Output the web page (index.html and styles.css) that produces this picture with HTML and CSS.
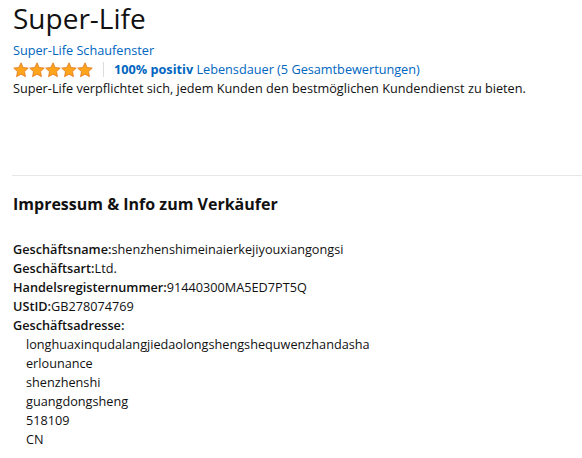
FILE: index.html
```html
<html>

<head>
  <title>Super-Life</title>
  <link rel="stylesheet" href="styles.css">
</head>

<body>
  <div id="seller">
    <h1>Super-Life</h1>
    <a class="store" href="#">Super-Life Schaufenster</a>
    <div class="rating">
      <span class="stars">
        <svg viewBox="0 0 16 16"><path d="M8 0.8l2.2 4.7 5.1 0.6-3.8 3.5 1 5.1L8 12.2 3.5 14.7l1-5.1L0.7 6.1l5.1-0.6z"/></svg>
        <svg viewBox="0 0 16 16"><path d="M8 0.8l2.2 4.7 5.1 0.6-3.8 3.5 1 5.1L8 12.2 3.5 14.7l1-5.1L0.7 6.1l5.1-0.6z"/></svg>
        <svg viewBox="0 0 16 16"><path d="M8 0.8l2.2 4.7 5.1 0.6-3.8 3.5 1 5.1L8 12.2 3.5 14.7l1-5.1L0.7 6.1l5.1-0.6z"/></svg>
        <svg viewBox="0 0 16 16"><path d="M8 0.8l2.2 4.7 5.1 0.6-3.8 3.5 1 5.1L8 12.2 3.5 14.7l1-5.1L0.7 6.1l5.1-0.6z"/></svg>
        <svg viewBox="0 0 16 16"><path d="M8 0.8l2.2 4.7 5.1 0.6-3.8 3.5 1 5.1L8 12.2 3.5 14.7l1-5.1L0.7 6.1l5.1-0.6z"/></svg>
      </span>
      <span class="sep"></span>
      <a href="#"><b>100% positiv</b> Lebensdauer (5 Gesamtbewertungen)</a>
    </div>
    <p>Super-Life verpflichtet sich, jedem Kunden den bestmöglichen Kundendienst zu bieten.</p>
  </div>

  <div id="impressum">
    <h3>Impressum &amp; Info zum Verkäufer</h3>
    <ul>
      <li><b>Geschäftsname:</b>shenzhenshimeinaierkejiyouxiangongsi</li>
      <li><b>Geschäftsart:</b>Ltd.</li>
      <li><b>Handelsregisternummer:</b>91440300MA5ED7PT5Q</li>
      <li><b>UStID:</b>GB278074769</li>
      <li><b>Geschäftsadresse:</b>
        <ul class="address">
          <li>longhuaxinqudalangjiedaolongshengshequwenzhandasha</li>
          <li>erlounance</li>
          <li>shenzhenshi</li>
          <li>guangdongsheng</li>
          <li>518109</li>
          <li>CN</li>
        </ul>
      </li>
    </ul>
  </div>
</body>

</html>
```

FILE: styles.css
```css
body {
  margin: 0;
  font-family: 'Open Sans', sans-serif;
  font-size: 12.7px;
  line-height: 19px;
  color: #111;
  background: #fff;
}

a {
  color: #0066c0;
  text-decoration: none;
}

b {
  font-weight: 600;
}

#seller {
  padding: 0 13px;
}

h1 {
  margin: 0;
  padding-top: 1px;
  font-size: 28px;
  font-weight: 400;
  line-height: 34px;
}

.store {
  display: block;
  margin-top: 6px;
}

.rating {
  display: flex;
  align-items: center;
}

.stars {
  display: flex;
}

.stars svg {
  width: 16px;
  height: 16px;
  fill: #ffa41c;
  stroke: #de7921;
  stroke-width: 0.8;
}

.sep {
  width: 1px;
  height: 15px;
  background: #ddd;
  margin: 0 10px;
}

.rating b {
  font-weight: 700;
}

p {
  margin: 0;
}

#impressum {
  margin: 77px 0 0 12px;
  border-top: 1px solid #e7e7e7;
  padding-top: 16px;
}

h3 {
  margin: 0 0 0 1px;
  font-size: 16px;
  font-weight: 700;
  line-height: 24px;
}

ul {
  list-style: none;
  margin: 24px 0 0 1px;
  padding: 0;
}

ul.address {
  margin: 0 0 0 13px;
}
```
